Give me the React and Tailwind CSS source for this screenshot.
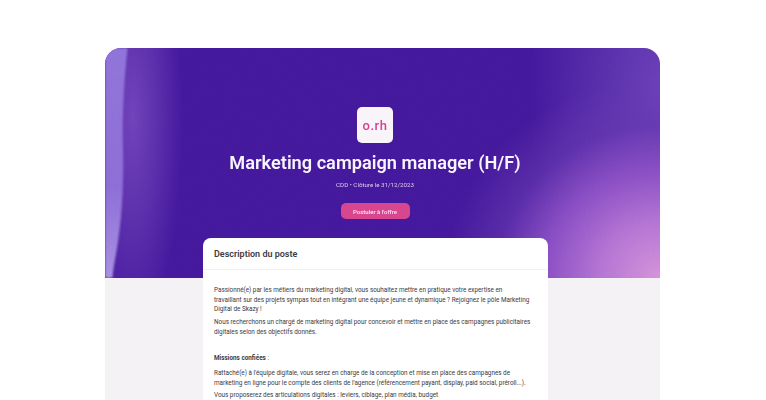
export default function App() {
  return (
    <div className="h-[400px] w-[766px] overflow-hidden bg-white pt-12 font-['Roboto',sans-serif] antialiased">
      <div className="ml-[105px] w-[555px]">
        <div
          className="relative h-[230px] overflow-hidden rounded-t-[16px] bg-[#43189a]"
          style={{
            backgroundImage:
              "radial-gradient(ellipse 215px 200px at 100% 100%, #d590da 0%, #b272d2 28%, #8a4fc4 52%, rgba(100,55,175,0.6) 76%, rgba(67,24,154,0) 100%), radial-gradient(ellipse 130px 260px at 100% 20%, rgba(112,70,188,0.85) 0%, rgba(67,24,154,0) 100%), radial-gradient(ellipse 50px 220px at 5% 30%, rgba(125,80,195,0.75) 0%, rgba(67,24,154,0) 100%)",
          }}
        >
          <svg className="absolute left-0 top-0 blur-[0.8px]" width="40" height="230" viewBox="0 0 40 230">
            <defs>
              <linearGradient id="band" x1="0" y1="0" x2="0" y2="1">
                <stop offset="0" stopColor="#8f72d9" />
                <stop offset="0.6" stopColor="#8a6cd6" />
                <stop offset="1" stopColor="#a78fe2" />
              </linearGradient>
            </defs>
            <path d="M-4 -4H23C19 30 17 70 18 100C19 135 17 170 12 200C10 212 8 222 7 234H-4Z" fill="url(#band)" />
          </svg>
          <svg className="absolute inset-0 opacity-[0.12] mix-blend-overlay" width="555" height="230">
            <filter id="grain">
              <feTurbulence type="fractalNoise" baseFrequency="0.9" numOctaves="2" stitchTiles="stitch" />
              <feColorMatrix type="saturate" values="0" />
            </filter>
            <rect width="555" height="230" filter="url(#grain)" />
          </svg>
          <div className="relative flex flex-col items-center pt-[59px] pr-[15px]">
            <div className="flex h-9 w-9 items-center justify-center rounded-[5px] bg-[#f8f4fa]">
              <span className="text-[13px] leading-none font-medium tracking-[0.5px] text-[#d9408f]">o.rh</span>
            </div>
            <h1 className="mt-[8px] text-[18.2px] leading-[24px] font-semibold whitespace-nowrap text-[#f8f4fc]">
              Marketing campaign manager (H/F)
            </h1>
            <p className="mt-[5px] text-[6.2px] leading-[10px] text-[#ddd0f0]">CDD • Clôture le 31/12/2023</p>
            <div className="mt-[13px] flex h-4 w-[69px] items-center justify-center rounded-[5px] bg-[#d8468f] text-[6px] font-medium text-[#fbe8f2]">
              Postuler à l'offre
            </div>
          </div>
        </div>
        <div className="h-[122px] bg-[#f5f2f6]" />
      </div>
      <div className="relative z-10 ml-[203px] -mt-[162px] w-[345px] rounded-t-[8px] bg-white px-[11px] text-[#3a3a42]">
        <div className="-mx-[11px] flex h-[32px] items-center border-b border-[#f2f0f4] px-[11px] pt-[2px] text-[9px] font-semibold text-[#3b3b44]">
          Description du poste
        </div>
        <div className="pt-[16px] text-[6.35px] leading-[9.7px] whitespace-nowrap">
          <p>
            Passionné(e) par les métiers du marketing digital, vous souhaitez mettre en pratique votre expertise en
            <br />
            travaillant sur des projets sympas tout en intégrant une équipe jeune et dynamique ? Rejoignez le pôle Marketing
            <br />
            Digital de Skazy !
          </p>
          <p className="mt-[3px]">
            Nous recherchons un chargé de marketing digital pour concevoir et mettre en place des campagnes publicitaires
            <br />
            digitales selon des objectifs donnés.
          </p>
          <p className="mt-[16px]">
            <b className="font-bold">Missions confiées</b> :
          </p>
          <p className="mt-[6px]">
            Rattaché(e) à l'équipe digitale, vous serez en charge de la conception et mise en place des campagnes de
            <br />
            marketing en ligne pour le compte des clients de l'agence (référencement payant, display, paid social, préroll...).
          </p>
          <p className="mt-[2px]">Vous proposerez des articulations digitales : leviers, ciblage, plan média, budget</p>
        </div>
      </div>
    </div>
  );
}
